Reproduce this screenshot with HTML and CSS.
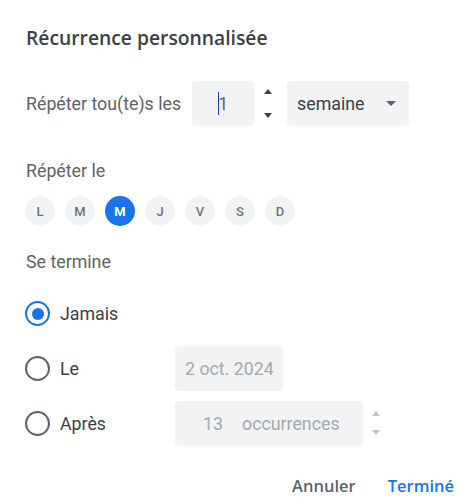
FILE: index.html
```html
<!DOCTYPE html>
<html lang="fr">
<head>
<meta charset="utf-8">
<link rel="stylesheet" href="styles.css">
</head>
<body>
<div class="dialog">
  <h1 class="title">Récurrence personnalisée</h1>

  <div class="repeat-row">
    <span class="label">Répéter tou(te)s les</span>
    <div class="num-box"><span class="caret"></span><span class="num">1</span></div>
    <div class="spinner">
      <svg width="8" height="5" viewBox="0 0 8 5"><path d="M0 5L4 0L8 5Z" fill="#3c4043"/></svg>
      <svg width="8" height="5" viewBox="0 0 8 5"><path d="M0 0L4 5L8 0Z" fill="#3c4043"/></svg>
    </div>
    <div class="select-box">
      <span>semaine</span>
      <svg width="10" height="5" viewBox="0 0 10 5"><path d="M0 0L5 5L10 0Z" fill="#5f6368"/></svg>
    </div>
  </div>

  <div class="section-label repeat-on">Répéter le</div>
  <div class="days">
    <span class="day">L</span>
    <span class="day">M</span>
    <span class="day selected">M</span>
    <span class="day">J</span>
    <span class="day">V</span>
    <span class="day">S</span>
    <span class="day">D</span>
  </div>

  <div class="section-label ends">Se termine</div>
  <div class="ends-list">
    <div class="end-row">
      <span class="radio checked"><span class="dot"></span></span>
      <span class="end-label">Jamais</span>
    </div>
    <div class="end-row">
      <span class="radio"></span>
      <span class="end-label">Le</span>
      <div class="field date">2 oct. 2024</div>
    </div>
    <div class="end-row">
      <span class="radio"></span>
      <span class="end-label">Après</span>
      <div class="field count"><span class="count-num">13</span><span>occurrences</span></div>
      <div class="spinner light">
        <svg width="8" height="5" viewBox="0 0 8 5"><path d="M0 5L4 0L8 5Z" fill="#bdc1c6"/></svg>
        <svg width="8" height="5" viewBox="0 0 8 5"><path d="M0 0L4 5L8 0Z" fill="#bdc1c6"/></svg>
      </div>
    </div>
  </div>

  <div class="actions">
    <button class="btn cancel">Annuler</button>
    <button class="btn done">Terminé</button>
  </div>
</div>
</body>
</html>
```
FILE: styles.css
```css
* { box-sizing: border-box; }
html, body { margin: 0; background: #fff; }
body { font-family: Roboto, "Noto Sans", Arial, sans-serif; color: #3c4043; }

.dialog {
  width: 473px;
  height: 504px;
  padding: 26px 19px 0 25px;
  display: flex;
  flex-direction: column;
}

.title {
  margin: 0;
  font-family: "Open Sans", Roboto, sans-serif;
  font-size: 19.3px;
  font-weight: 600;
  line-height: 24px;
  color: #3c4043;
  padding-left: 1px;
}

.repeat-row {
  margin-top: 31px;
  display: flex;
  align-items: center;
  height: 45px;
}
.label { font-size: 17.8px; color: #5f6368; padding-left: 1px; }

.num-box {
  margin-left: 11px;
  width: 62px;
  height: 45px;
  background: #f1f3f4;
  border-radius: 4px;
  display: flex;
  align-items: center;
  justify-content: center;
  font-size: 17.8px;
  color: #5f6368;
}
.caret {
  width: 1.5px;
  height: 23px;
  background: #1a3fa8;
  margin-right: -3px;
}
.num { margin-left: 2px; }

.spinner {
  width: 27px;
  height: 45px;
  display: flex;
  flex-direction: column;
  align-items: center;
  justify-content: space-between;
  padding: 8px 0 8px;
}
.spinner svg { display: block; }

.select-box {
  margin-left: 6px;
  width: 122px;
  height: 45px;
  background: #f1f3f4;
  border-radius: 4px;
  display: flex;
  align-items: center;
  justify-content: space-between;
  padding: 0 13px 0 10px;
  font-size: 17.8px;
  color: #3c4043;
}

.section-label { font-size: 17.8px; line-height: 20px; color: #5f6368; padding-left: 1px; }
.repeat-on { margin-top: 35px; }

.days {
  margin-top: 15px;
  display: flex;
  gap: 10px;
}
.day {
  width: 30px;
  height: 30px;
  border-radius: 50%;
  background: #f1f3f4;
  color: #70757a;
  font-size: 13px;
  font-weight: 500;
  display: flex;
  align-items: center;
  justify-content: center;
}
.day.selected { background: #1a73e8; color: #fff; font-weight: 700; }

.ends { margin-top: 26px; }

.ends-list {
  margin-top: 19px;
  display: flex;
  flex-direction: column;
  gap: 10px;
}
.end-row {
  display: flex;
  align-items: center;
  height: 45px;
}
.radio {
  width: 25px;
  height: 25px;
  border-radius: 50%;
  border: 2px solid #5f6368;
  display: flex;
  align-items: center;
  justify-content: center;
  flex: none;
}
.radio.checked { border-color: #1a73e8; border-width: 2.5px; }
.dot { width: 12px; height: 12px; border-radius: 50%; background: #1a73e8; }
.end-label {
  margin-left: 10px;
  width: 115px;
  font-size: 17.8px;
  color: #3c4043;
}

.field {
  height: 45px;
  background: #f1f3f4;
  border-radius: 4px;
  display: flex;
  align-items: center;
  font-size: 17.8px;
  color: #a5a9ad;
}
.field.date { width: 108px; padding-left: 10px; }
.field.count { width: 188px; padding-left: 28px; }
.count-num { width: 39px; }
.spinner.light { width: 26px; padding: 10px 0 11px; }

.actions {
  margin-top: 30px;
  display: flex;
  justify-content: flex-end;
  gap: 32px;
}
.btn {
  border: none;
  background: none;
  padding: 0;
  font-family: "Open Sans", Roboto, sans-serif;
  font-size: 16.5px;
  font-weight: 600;
  line-height: 20px;
  cursor: pointer;
}
.cancel { color: #5f6368; }
.done { color: #1a73e8; }
```
